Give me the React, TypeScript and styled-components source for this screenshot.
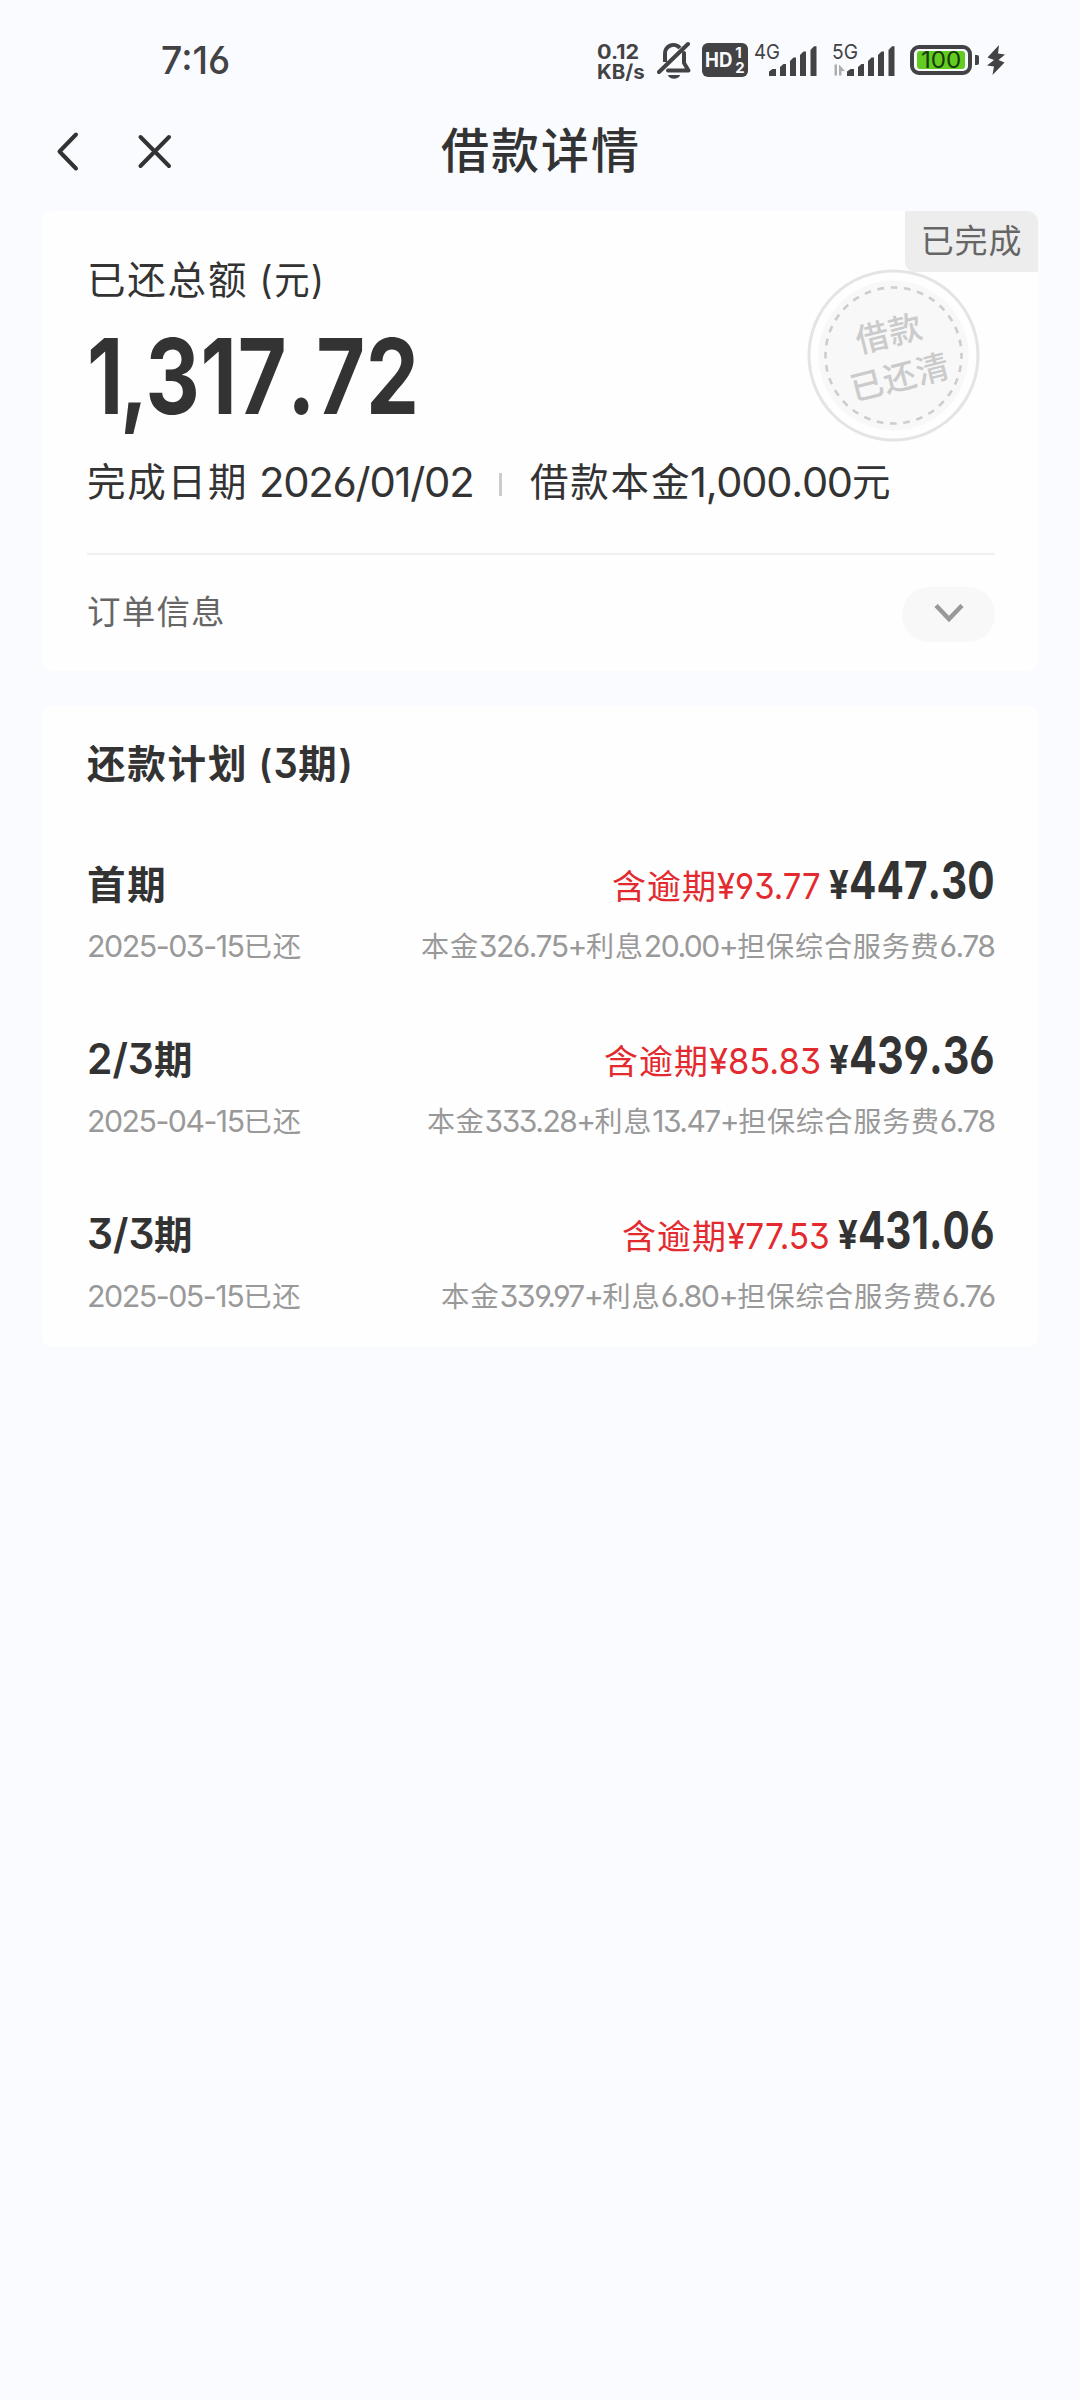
import React, { useLayoutEffect, useRef, useState } from "react";
import styled, { createGlobalStyle, css } from "styled-components";

const ink = "#333333";
const statusInk = "#434345";

const GlobalStyle = createGlobalStyle`
  *, *::before, *::after { box-sizing: border-box; }
  body {
    margin: 0;
    background: #fafbff;
    color: ${ink};
    font-family: Inter, "Noto Sans CJK SC", sans-serif;
    -webkit-font-smoothing: antialiased;
  }
`;

/* ---------- text helpers ---------- */

const FitBox = styled.span<{ $w: number }>`
  display: inline-block;
  width: ${(p) => p.$w}px;
  white-space: nowrap;
`;

const FitInner = styled.span`
  display: inline-block;
  transform-origin: left center;
`;

/** Stretches or condenses a run of text so that it fills a given width. */
function Fit({ w, children }: { w: number; children: React.ReactNode }) {
  const ref = useRef<HTMLSpanElement>(null);
  const [scale, setScale] = useState(1);
  useLayoutEffect(() => {
    if (ref.current) setScale(w / ref.current.offsetWidth);
  }, [w]);
  return (
    <FitBox $w={w}>
      <FitInner ref={ref} style={{ transform: `scaleX(${scale})` }}>
        {children}
      </FitInner>
    </FitBox>
  );
}

const Num = styled.span<{ $size: number; $ls?: number; $flat?: boolean; $loose?: boolean }>`
  font-size: ${(p) => p.$size}px;
  letter-spacing: ${(p) => p.$ls ?? 0}em;
  font-kerning: ${(p) => (p.$loose ? "none" : "auto")};
  font-feature-settings: "cv03", "cv04"${(p) => (p.$flat ? `, "cv09"` : "")};
`;

const TightComma = styled.span`
  margin: 0 -0.04em 0 -0.05em;
`;

/** Sets digits and Han characters of one string in their own sizes. */
function Mixed({ text, size }: { text: string; size: number }) {
  return (
    <>
      {text.split(/([\d.+\-/¥]+)/).filter(Boolean).map((part, i) =>
        /^[\d.+\-/¥]/.test(part) ? (
          <Num key={i} $size={size} $ls={-0.05} $flat>{part}</Num>
        ) : (
          <span key={i}>{part}</span>
        )
      )}
    </>
  );
}

/* ---------- page frame ---------- */

const Page = styled.main`
  width: 1080px;
  height: 2400px;
  background: #fafbff;
  overflow: hidden;
`;

const StatusBar = styled.header`
  display: flex;
  justify-content: space-between;
  align-items: center;
  height: 120px;
  padding: 0 74px 0 161px;
  color: ${statusInk};
`;

const Clock = styled.time`
  font-size: 38px;
  line-height: 44px;
  font-weight: 450;
`;

const StatusIcons = styled.div`
  display: flex;
  align-items: center;
  height: 40px;
`;

const NetSpeed = styled.div`
  display: flex;
  flex-direction: column;
  width: 47px;
  margin: 3px 13px 0 0;
  font-size: 20px;
  line-height: 20px;
  font-weight: 650;
`;

const HdBadge = styled.div`
  display: flex;
  align-items: center;
  justify-content: center;
  gap: 3px;
  width: 46px;
  height: 34px;
  margin: 0 5px 0 11px;
  border-radius: 6px;
  background: ${statusInk};
  color: #fafbff;
  font-size: 20px;
  line-height: 34px;
  font-weight: 700;
`;

const SimStack = styled.span`
  display: flex;
  flex-direction: column;
  font-size: 15px;
  line-height: 15px;
`;

const Signal = styled.div<{ $ml?: number }>`
  display: flex;
  width: 66px;
  height: 40px;
  margin-left: ${(p) => p.$ml ?? 0}px;
`;

const Battery = styled.div`
  display: flex;
  align-items: center;
  gap: 3px;
  margin: 0 7px 0 13px;
  &::after {
    content: "";
    width: 4px;
    height: 10px;
    border-radius: 0 2px 2px 0;
    background: ${statusInk};
  }
`;

const BatteryShell = styled.div`
  width: 62px;
  height: 30px;
  padding: 2px 3px;
  border: 4px solid ${statusInk};
  border-radius: 9px;
`;

const BatteryLevel = styled.div`
  display: flex;
  align-items: center;
  justify-content: center;
  height: 18px;
  border-radius: 3px;
  background: #62cc22;
  color: #173a08;
  font-size: 23px;
  line-height: 18px;
`;

const NavBar = styled.nav`
  display: grid;
  grid-template-columns: 1fr auto 1fr;
  align-items: center;
  height: 62px;
  padding: 0 53px 0 55px;
`;

const NavActions = styled.div`
  display: flex;
  align-items: center;
  gap: 56px;
`;

const IconButton = styled.button`
  display: flex;
  padding: 0;
  border: 0;
  background: none;
  color: ${ink};
`;

const NavTitle = styled.h1`
  margin: 0;
  font-size: 48px;
  line-height: 62px;
  font-weight: 500;
  letter-spacing: 2px;
`;

const Content = styled.div`
  display: flex;
  flex-direction: column;
  gap: 35px;
  padding: 29px 42px 0;
`;

const Card = styled.section<{ $h: number }>`
  position: relative;
  height: ${(p) => p.$h}px;
  padding: 0 43px 0 45px;
  border-radius: 10px;
  background: #fefefe;
`;

/* ---------- summary card ---------- */

const DoneTag = styled.div`
  position: absolute;
  top: 0;
  right: 0;
  display: flex;
  align-items: center;
  justify-content: center;
  width: 133px;
  height: 61px;
  border-radius: 0 10px 0 10px;
  background: #ededed;
  color: #666;
  font-size: 33px;
  line-height: 61px;
  letter-spacing: 0.8px;
`;

const Stamp = styled.div`
  position: absolute;
  top: 58px;
  right: 58px;
  width: 173px;
  height: 173px;
  display: grid;
  place-items: center;
  > * { grid-area: 1 / 1; }
`;

const StampText = styled.div`
  padding-left: 3px;
  transform: rotate(-14deg);
  color: #cbcbcb;
  font-size: 33px;
  line-height: 45px;
  font-weight: 500;
  letter-spacing: 0.8px;
  text-align: center;
`;

const hanLine = css`
  font-size: 38.5px;
  letter-spacing: 1.8px;
  white-space: nowrap;
`;

const AmountLabel = styled.div`
  ${hanLine}
  padding-top: 39px;
  height: 100px;
  line-height: 60px;
`;

const TotalAmount = styled.div`
  height: 130px;
  line-height: 130px;
  font-weight: 750;
`;

const Facts = styled.div`
  ${hanLine}
  display: flex;
  align-items: center;
  height: 81px;
  line-height: 80px;
  padding-top: 1px;
`;

const FactLabel = styled.span<{ $w: number }>`
  width: ${(p) => p.$w}px;
`;

const FactRule = styled.i`
  width: 3px;
  height: 23px;
  margin: 5px 28px 0 26px;
  background: #ccc;
`;

const OrderRow = styled.div`
  display: flex;
  align-items: center;
  justify-content: space-between;
  height: 120px;
  margin-top: 31px;
  border-top: 2px solid #f0f0f1;
`;

const OrderLabel = styled.span`
  margin-bottom: 9px;
  color: #666;
  font-size: 33.5px;
  letter-spacing: 1.2px;
`;

const ExpandButton = styled.button`
  display: flex;
  align-items: center;
  justify-content: center;
  width: 93px;
  height: 55px;
  border: 0;
  border-radius: 28px;
  background: #f8f8f8;
`;

/* ---------- plan card ---------- */

const PlanTitle = styled.h2`
  ${hanLine}
  margin: 0;
  padding-top: 27px;
  height: 135px;
  line-height: 60px;
  font-weight: 600;
`;

const Installment = styled.article`
  display: flex;
  flex-direction: column;
  height: 175px;
`;

const InstallmentRow = styled.div<{ $h: number }>`
  display: flex;
  justify-content: space-between;
  align-items: baseline;
  height: ${(p) => p.$h}px;
  line-height: ${(p) => p.$h}px;
  white-space: nowrap;
`;

const Term = styled.strong`
  ${hanLine}
  font-weight: 600;
`;

const Amounts = styled.div`
  display: flex;
  align-items: baseline;
  font-weight: 750;
`;

const Overdue = styled.span`
  display: flex;
  align-items: baseline;
  margin-right: 8px;
  color: #e22a2f;
  font-size: 34px;
  letter-spacing: 1px;
  font-weight: 400;
`;

const Note = styled.span`
  color: #999;
  font-size: 28px;
  letter-spacing: 0.8px;
`;

/* ---------- icons ---------- */

const BackIcon = () => (
  <svg width="26" height="42" viewBox="0 0 26 42" fill="none" stroke="currentColor" strokeWidth="4" strokeLinecap="round" strokeLinejoin="round">
    <path d="M21 4.5 4.500 21.5l16.500 17" />
  </svg>
);

const CloseIcon = () => (
  <svg width="36" height="42" viewBox="0 0 36 42" fill="none" stroke="currentColor" strokeWidth="4" strokeLinecap="round">
    <path d="M3.5 7 32 36M32 7 3.5 36" />
  </svg>
);

const BellOffIcon = () => (
  <svg width="34" height="40" viewBox="0 0 34 40" fill="none" stroke={statusInk} strokeWidth="4">
    <path d="M8 22V14.500a8.500 8.500 0 0 1 15-6.500" />
    <path d="M11 30.500h20.500L27 23V13" strokeLinejoin="round" strokeLinecap="round" />
    <path d="M31 4 2 32" strokeLinecap="round" />
    <path d="M11 35h12c-1 5-11 5-12 0Z" fill={statusInk} stroke="none" />
  </svg>
);

function SignalIcon({ label, arrows }: { label: string; arrows?: boolean }) {
  return (
    <Signal $ml={arrows ? 12 : 0}>
      <svg width="66" height="40" viewBox="0 0 66 40" fill={statusInk}>
        <text x="1" y="18.500" fontSize="20.500" fontFamily="Inter, sans-serif" textLength="26" lengthAdjust="spacingAndGlyphs">{label}</text>
        {arrows && <path d="M0 31.500 4.500 25V35.500H7V24.500H5ZM9 24.500v11h2.500V31H15Z" fill="#adadaf" transform="translate(-1 0)" />}
        <path d="M16 36v-4.500l3.500-2.500H23v7Z" />
        <path d="M27 36V27l3.500-3H33v12Z" />
        <path d="M37 36V21l3.500-3.500H43V36Z" />
        <path d="M47 36V15l3.500-3.500H53V36Z" />
        <path d="M57.500 36V10L61 6.200h2.500V36Z" />
      </svg>
    </Signal>
  );
}

const BoltIcon = () => (
  <svg width="20" height="32" viewBox="0 0 20 32" fill={statusInk}>
    <path d="M13 1 1.500 13.500l6.500 2.500L1 21.500l7 1L6.500 31 18.500 18.500l-6-2.500L19 10.500l-7-1Z" />
  </svg>
);

const StampRings = () => (
  <svg width="173" height="173" viewBox="0 0 173 173" fill="none">
    <circle cx="86.500" cy="86.500" r="84.500" stroke="#e4e4e4" strokeWidth="3" />
    <circle cx="86.500" cy="86.500" r="75" fill="#f8f8f8" />
    <circle cx="86.500" cy="86.500" r="68" stroke="#cdcdcd" strokeWidth="2.600" strokeDasharray="6.700 6.650" strokeDashoffset="3.300" />
  </svg>
);

const ChevronIcon = () => (
  <svg width="30" height="20" viewBox="0 0 30 20" fill="none" stroke="#999" strokeWidth="4.500">
    <path d="M2 1.500 15 15 28 1.500" />
  </svg>
);

/* ---------- data ---------- */

const plan = [
  { term: "首期", date: "2025-03-15已还", late: "¥93.77", lateW: 104, sum: "447.30", sumW: 146, note: "本金326.75+利息20.00+担保综合服务费6.78", noteW: 574 },
  { term: "2/3期", date: "2025-04-15已还", late: "¥85.83", lateW: 112, sum: "439.36", sumW: 146, note: "本金333.28+利息13.47+担保综合服务费6.78", noteW: 568 },
  { term: "3/3期", date: "2025-05-15已还", late: "¥77.53", lateW: 103, sum: "431.06", sumW: 137, note: "本金339.97+利息6.80+担保综合服务费6.76", noteW: 554 },
];

function TermLabel({ term }: { term: string }) {
  const count = term.replace("期", "");
  if (!/\d/.test(count)) return <Term>{term}</Term>;
  return (
    <Term>
      <Fit w={67}><Num $size={42} $flat>{count}</Num></Fit>期
    </Term>
  );
}

export default function App() {
  return (
    <Page>
      <GlobalStyle />
      <StatusBar>
        <Clock><Fit w={69}><Num $size={38}>7:16</Num></Fit></Clock>
        <StatusIcons>
          <NetSpeed>
            <Fit w={42}>0.12</Fit>
            <Fit w={48}>KB/s</Fit>
          </NetSpeed>
          <BellOffIcon />
          <HdBadge>
            <Fit w={27}>HD</Fit>
            <SimStack><span>1</span><span>2</span></SimStack>
          </HdBadge>
          <SignalIcon label="4G" />
          <SignalIcon label="5G" arrows />
          <Battery>
            <BatteryShell>
              <BatteryLevel><Fit w={40}>100</Fit></BatteryLevel>
            </BatteryShell>
          </Battery>
          <BoltIcon />
        </StatusIcons>
      </StatusBar>

      <NavBar>
        <NavActions>
          <IconButton aria-label="返回"><BackIcon /></IconButton>
          <IconButton aria-label="关闭"><CloseIcon /></IconButton>
        </NavActions>
        <NavTitle>借款详情</NavTitle>
      </NavBar>

      <Content>
        <Card $h={460}>
          <AmountLabel>已还总额<Fit w={78}>&nbsp;(元)</Fit></AmountLabel>
          <TotalAmount>
            <Fit w={333}>
              <Num $size={104} $ls={0.01} $loose>1<TightComma>,</TightComma>317.72</Num>
            </Fit>
          </TotalAmount>
          <Facts>
            <FactLabel $w={172}>完成日期</FactLabel>
            <Fit w={214}><Num $size={41} $ls={-0.03} $loose>2026/01/02</Num></Fit>
            <FactRule />
            <FactLabel $w={160}>借款本金</FactLabel>
            <Fit w={162}><Num $size={41} $ls={-0.03} $loose>1,000.00</Num></Fit>
            <span>元</span>
          </Facts>
          <OrderRow>
            <OrderLabel>订单信息</OrderLabel>
            <ExpandButton aria-label="展开"><ChevronIcon /></ExpandButton>
          </OrderRow>
          <Stamp>
            <StampRings />
            <StampText>借款<br />已还清</StampText>
          </Stamp>
          <DoneTag>已完成</DoneTag>
        </Card>

        <Card $h={641}>
          <PlanTitle>还款计划<Fit w={50}>&nbsp;(<Num $size={41} $flat>3</Num></Fit>期)</PlanTitle>
          {plan.map((p) => (
            <Installment key={p.term}>
              <InstallmentRow $h={79}>
                <TermLabel term={p.term} />
                <Amounts>
                  <Overdue>
                    含逾期
                    <Fit w={p.lateW}><Num $size={36} $flat>{p.late}</Num></Fit>
                  </Overdue>
                  <Fit w={20}><Num $size={40}>¥</Num></Fit>
                  <Fit w={p.sumW}><Num $size={52} $loose>{p.sum}</Num></Fit>
                </Amounts>
              </InstallmentRow>
              <InstallmentRow $h={52}>
                <Note><Fit w={215}><Mixed text={p.date} size={30} /></Fit></Note>
                <Note><Fit w={p.noteW}><Mixed text={p.note} size={30} /></Fit></Note>
              </InstallmentRow>
            </Installment>
          ))}
        </Card>
      </Content>
    </Page>
  );
}
